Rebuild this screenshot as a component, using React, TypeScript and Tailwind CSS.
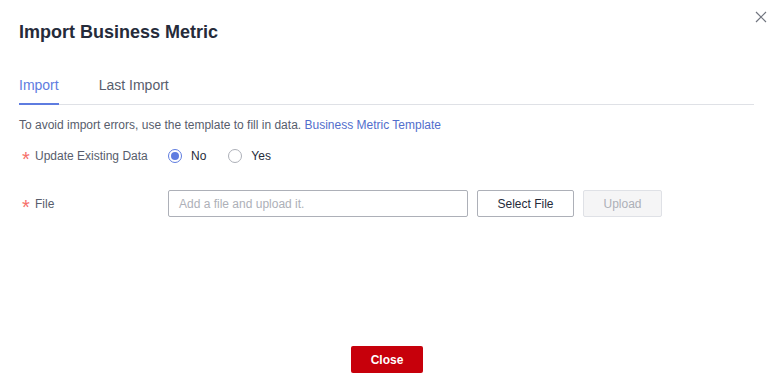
import React from 'react';

const Star = () => (
  <span className="relative top-[3px] mr-[4px] w-[10px] text-center text-[20px] leading-[12px] text-[#f66f6a]">*</span>
);

export default function App() {
  return (
    <div
      className="relative flex h-[386px] w-[777px] flex-col bg-white text-[#575d6c]"
      style={{ fontFamily: '"Liberation Sans", Arial, sans-serif' }}
    >
      <button className="absolute right-[10px] top-[11px] flex h-[12px] w-[12px] items-center justify-center text-[#71757f]">
        <svg width="12" height="12" viewBox="0 0 12 12" fill="none" stroke="currentColor" strokeWidth="1.2">
          <path d="M1 1L11 11M11 1L1 11" />
        </svg>
      </button>

      <div className="mt-[20px] pl-[19px] text-[18px] font-bold leading-[24px] text-[#252b3a]">
        Import Business Metric
      </div>

      <div className="ml-[19px] mr-[23px] mt-[31px] flex gap-[40px] border-b border-[#dfe1e6] text-[14px] leading-[20px]">
        <div className="relative pb-[9px] text-[#5e7ce0]">
          Import
          <span className="absolute bottom-[-1px] left-0 right-0 h-[2px] bg-[#5e7ce0]" />
        </div>
        <div className="pb-[9px] text-[#575d6c]">Last Import</div>
      </div>

      <div className="mt-[11px] pl-[19px] text-[12px] leading-[18px]">
        To avoid import errors, use the template to fill in data.{' '}
        <span className="text-[#526ecc]">Business Metric Template</span>
      </div>

      <div className="mt-[12px] flex h-[20px] items-center pl-[21px] text-[12px]">
        <div className="flex w-[147px] items-center">
          <Star />
          Update Existing Data
        </div>
        <label className="flex items-center">
          <span className="flex h-[14px] w-[14px] items-center justify-center rounded-full border border-[#5e7ce0]">
            <span className="h-[8px] w-[8px] rounded-full bg-[#5e7ce0]" />
          </span>
          <span className="ml-[9px] text-[#252b3a]">No</span>
        </label>
        <label className="ml-[22px] flex items-center">
          <span className="h-[14px] w-[14px] rounded-full border border-[#adb0b8]" />
          <span className="ml-[9px] text-[#252b3a]">Yes</span>
        </label>
      </div>

      <div className="mt-[24px] flex items-center pl-[21px] text-[12px]">
        <div className="flex w-[147px] items-center">
          <Star />
          File
        </div>
        <div className="flex h-[27px] w-[300px] items-center rounded-[2px] border border-[#adb0b8] px-[10px] text-[#adb0b8]">
          Add a file and upload it.
        </div>
        <button className="ml-[9px] h-[27px] w-[97px] rounded-[2px] border border-[#adb0b8] text-[#252b3a]">
          Select File
        </button>
        <button className="ml-[9px] h-[27px] w-[79px] rounded-[2px] border border-[#dfe1e6] bg-[#f5f5f6] text-[#adb0b8]">
          Upload
        </button>
      </div>

      <div className="mt-auto mb-[13px] flex justify-center pr-[3px]">
        <button className="h-[27px] w-[72px] rounded-[2px] bg-[#c7000b] text-[12px] font-bold text-white">
          Close
        </button>
      </div>
    </div>
  );
}
